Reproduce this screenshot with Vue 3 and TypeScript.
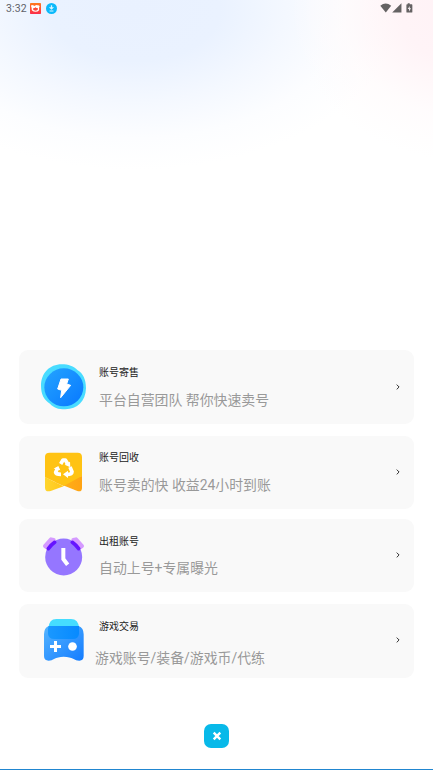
<script setup lang="ts">
interface Entry {
  id: 'sell' | 'recycle' | 'rent' | 'trade'
  title: string
  desc: string
}

const entries: Entry[] = [
  { id: 'sell', title: '账号寄售', desc: '平台自营团队 帮你快速卖号' },
  { id: 'recycle', title: '账号回收', desc: '账号卖的快 收益24小时到账' },
  { id: 'rent', title: '出租账号', desc: '自动上号+专属曝光' },
  { id: 'trade', title: '游戏交易', desc: '游戏账号/装备/游戏币/代练' },
]
</script>

<template>
  <main class="screen">
    <header class="status">
      <span class="time">3:32</span>
      <svg class="app-icon" viewBox="0 0 33 33">
        <defs>
          <linearGradient id="flame-fill" x1="0" y1="0" x2="0" y2="1">
            <stop offset="0" stop-color="#ff7a1c" />
            <stop offset="1" stop-color="#fb2d4b" />
          </linearGradient>
        </defs>
        <rect width="33" height="33" rx="2" fill="url(#flame-fill)" />
        <path d="M3 9Q4 5 9 7L15 9Q17 4 22 7Q29 5 29 11L27 14Q30 26 17 26Q3 26 5 15Z" fill="#fff" />
        <path d="M9 19Q9 14 14 15Q16 10 19 15Q25 14 24 19Q22 23 17 23Q10 23 9 19Z" fill="#fb4a3b" />
      </svg>
      <svg class="download-icon" viewBox="0 0 34 34">
        <circle cx="17" cy="17" r="17" fill="#0bb9fb" />
        <path d="M15 7h4v6h6l-8 8-8-8h6zM11 23h12v3H11z" fill="#d9f6ff" />
      </svg>
      <span class="spacer"></span>
      <svg class="signals" viewBox="0 0 100 32">
        <g fill="#656263">
          <path d="M1 8Q17-5 34 8L17.500 29Z" />
          <path d="M65 1V29H37Z" />
          <path d="M84 1h6v3h6q2 0 2 2v21q0 2-2 2H82q-2 0-2-2V6q0-2 2-2h2Z" />
        </g>
        <path d="M90 9L84 18h4v8l6-10h-4Z" fill="#f9f1f5" />
      </svg>
    </header>

    <section class="cards">
      <article v-for="entry in entries" :key="entry.id" class="card" :class="entry.id">
        <svg v-if="entry.id === 'sell'" class="picture" viewBox="66 45 156 156">
          <defs>
            <linearGradient id="sell-fill" x1="0" y1="0" x2="1" y2="1">
              <stop offset="0" stop-color="#24a4ff" />
              <stop offset="1" stop-color="#0878ff" />
            </linearGradient>
          </defs>
          <path d="M78 122C78 84 104 58 140 58C160 58 176 63 188 76C204 85 213 103 213 130C212 168 187 193 151 193C129 193 116 188 105 176C87 165 78 148 78 122Z" fill="#49dcff" />
          <ellipse cx="146.500" cy="127" rx="58.500" ry="57" fill="url(#sell-fill)" />
          <path d="M138 102H160L155 117L167 121L137 158L140 136L128 132Z" fill="#fff" stroke="#fff" stroke-width="3" stroke-linejoin="round" />
        </svg>
        <svg v-else-if="entry.id === 'recycle'" class="picture" viewBox="66 45 156 156">
          <defs>
            <linearGradient id="left-fold" x1="0" y1="0" x2="1" y2="0">
              <stop offset="0" stop-color="#ffd52d" />
              <stop offset="1" stop-color="#ffc51a" />
            </linearGradient>
            <linearGradient id="right-fold" x1="0" y1="0" x2="1" y2="0">
              <stop offset="0" stop-color="#ffb51a" />
              <stop offset="1" stop-color="#ffa313" />
            </linearGradient>
          </defs>
          <path d="M201 138V173Q201 187 187 183L118 155Z" fill="url(#right-fold)" />
          <path d="M90 80Q90 68 104 68H188Q201 68 201 81V138L146 168L90 142Z" fill="#ffc313" />
          <path d="M90 141L118 155L146 169L107 183Q90 187 90 173Z" fill="url(#left-fold)" />
          <g fill="none" stroke="#fff" stroke-width="11" stroke-linejoin="round">
            <path d="M137 102L144 90H151L158 102" />
            <path d="M128 114L122 127Q123 133 138 133" />
            <path d="M165 111L171 125Q171 133 155 133" />
          </g>
          <path d="M149 104L165 95L166 112ZM116 116L130 108L136 121ZM144 133L159 122V144Z" fill="#fff" />
        </svg>
        <svg v-else-if="entry.id === 'rent'" class="picture" viewBox="66 45 156 156">
          <circle cx="146" cy="126" r="55.500" fill="#9576ff" />
          <g fill="none" stroke-linecap="round" stroke-linejoin="round">
            <path d="M90 93L108 73L116 75L97 98Z" fill="#d59aff" stroke="#d59aff" stroke-width="12" />
            <path d="M201 93L183 73L175 75L194 98Z" fill="#d59aff" stroke="#d59aff" stroke-width="12" />
            <path d="M100 101Q109 89 119 82" stroke="#6514ff" stroke-width="11" />
            <path d="M191 101Q182 89 172 82" stroke="#6514ff" stroke-width="11" />
          </g>
          <path d="M145 99V132L158 149" fill="none" stroke="#fff" stroke-width="12" />
        </svg>
        <svg v-else class="picture" viewBox="66 45 156 156">
          <defs>
            <linearGradient id="pad-fill" x1="0" y1="0" x2="1" y2="1">
              <stop offset="0" stop-color="#55b5ff" />
              <stop offset="1" stop-color="#147cff" />
            </linearGradient>
            <linearGradient id="lid-fill" x1="0" y1="0" x2="1" y2="0">
              <stop offset="0" stop-color="#1a98ff" />
              <stop offset="1" stop-color="#078aff" />
            </linearGradient>
          </defs>
          <path d="M100 85Q102 57 124 57H168Q190 57 193 85Z" fill="#45ddff" />
          <path d="M101 78H191Q206 84 206 103V168Q206 182 193 182C179 182 173 170 146 170C120 170 114 182 101 182Q87 182 87 168V103Q87 84 101 78Z" fill="url(#pad-fill)" />
          <path d="M101 78H192V102Q190 117 174 117H117Q101 117 99 102V86Z" fill="url(#lid-fill)" />
          <path d="M117 123h9v12h12v9H126v12h-9V144H105v-9h12Z" fill="#fff" />
          <circle cx="172.500" cy="139.500" r="13" fill="#fff" />
        </svg>
        <div class="copy">
          <h2>{{ entry.title }}</h2>
          <p>{{ entry.desc }}</p>
        </div>
        <svg class="chevron" viewBox="0 0 4 6"><path d="M.7.6L3.100 3L.7 5.400" /></svg>
      </article>
    </section>

    <button class="close" aria-label="关闭">
      <svg viewBox="0 0 10 10"><path d="M1.700 1.700L8.300 8.300M8.300 1.700L1.700 8.300" /></svg>
    </button>
  </main>
</template>

<style>
body {
  margin: 0;
  background: #fff;
}
</style>

<style scoped>
.screen {
  box-sizing: border-box;
  display: flex;
  flex-direction: column;
  width: 433px;
  height: 770px;
  overflow: hidden;
  border-bottom: 1px solid #2186d0;
  font-family: Roboto, "Noto Sans CJK SC", sans-serif;
  background:
    radial-gradient(ellipse 170px 150px at 460px 10px, #fff2f6 0%, #fff4f7 35%, rgba(255, 250, 251, 0.6) 70%, rgba(255, 255, 255, 0) 100%),
    radial-gradient(ellipse 265px 160px at 135px 10px, #e9f1ff 0%, #eaf2ff 32%, #f4f8ff 57%, #fcfdff 80%, #fff 100%);
}

.status {
  display: flex;
  align-items: center;
  height: 17px;
  padding: 0 20px 0 6px;
}

.time {
  width: 24px;
  font-size: 10.500px;
  line-height: 17px;
  letter-spacing: 0.1px;
  color: #606269;
  white-space: nowrap;
}

.app-icon {
  width: 11px;
  height: 11px;
}

.download-icon {
  width: 11px;
  height: 11px;
  margin-left: 5px;
}

.spacer {
  flex: 1;
}

.signals {
  width: 33px;
  height: 10.600px;
}

.cards {
  display: flex;
  flex-direction: column;
  padding: 333px 19px 0;
}

.card {
  box-sizing: border-box;
  display: flex;
  align-items: flex-start;
  height: 74px;
  padding: 10px 14px 0 18px;
  border-radius: 9px;
  background: #f9f9f9;
}

.recycle {
  height: 73.500px;
  margin-top: 11.500px;
  padding-top: 9.500px;
}

.rent {
  margin-top: 10px;
  height: 73px;
  padding-top: 11px;
}

.trade {
  height: 73.700px;
  margin-top: 12px;
  padding-top: 11px;
}

.picture {
  width: 52px;
  height: 52px;
}

.copy {
  flex: 1;
  padding: 5px 0 0 10px;
  white-space: nowrap;
}

h2,
p {
  margin: 0;
  font-weight: 400;
}

h2 {
  font-size: 10px;
  line-height: 16px;
  color: #222;
}

p {
  margin-top: 9px;
  font-size: 13.900px;
  line-height: 20px;
  color: #999;
}

.rent .copy,
.trade .copy {
  padding-top: 4px;
}

.rent p {
  margin-top: 8px;
}

.trade p {
  margin: 13px 0 0 -4px;
}

.chevron {
  width: 4px;
  height: 6px;
  margin: 24px 0 0;
}

.rent .chevron,
.trade .chevron {
  margin-top: 22px;
}

.chevron path {
  fill: none;
  stroke: #333;
  stroke-width: 1;
}

.close {
  display: flex;
  align-items: center;
  justify-content: center;
  align-self: center;
  width: 24.500px;
  height: 24px;
  margin-top: 46.300px;
  padding: 0;
  border: 0;
  border-radius: 7px;
  background: #08b9e9;
}

.close svg {
  width: 10px;
  height: 10px;
}

.close path {
  stroke: #fff;
  stroke-width: 2.400;
}
</style>
